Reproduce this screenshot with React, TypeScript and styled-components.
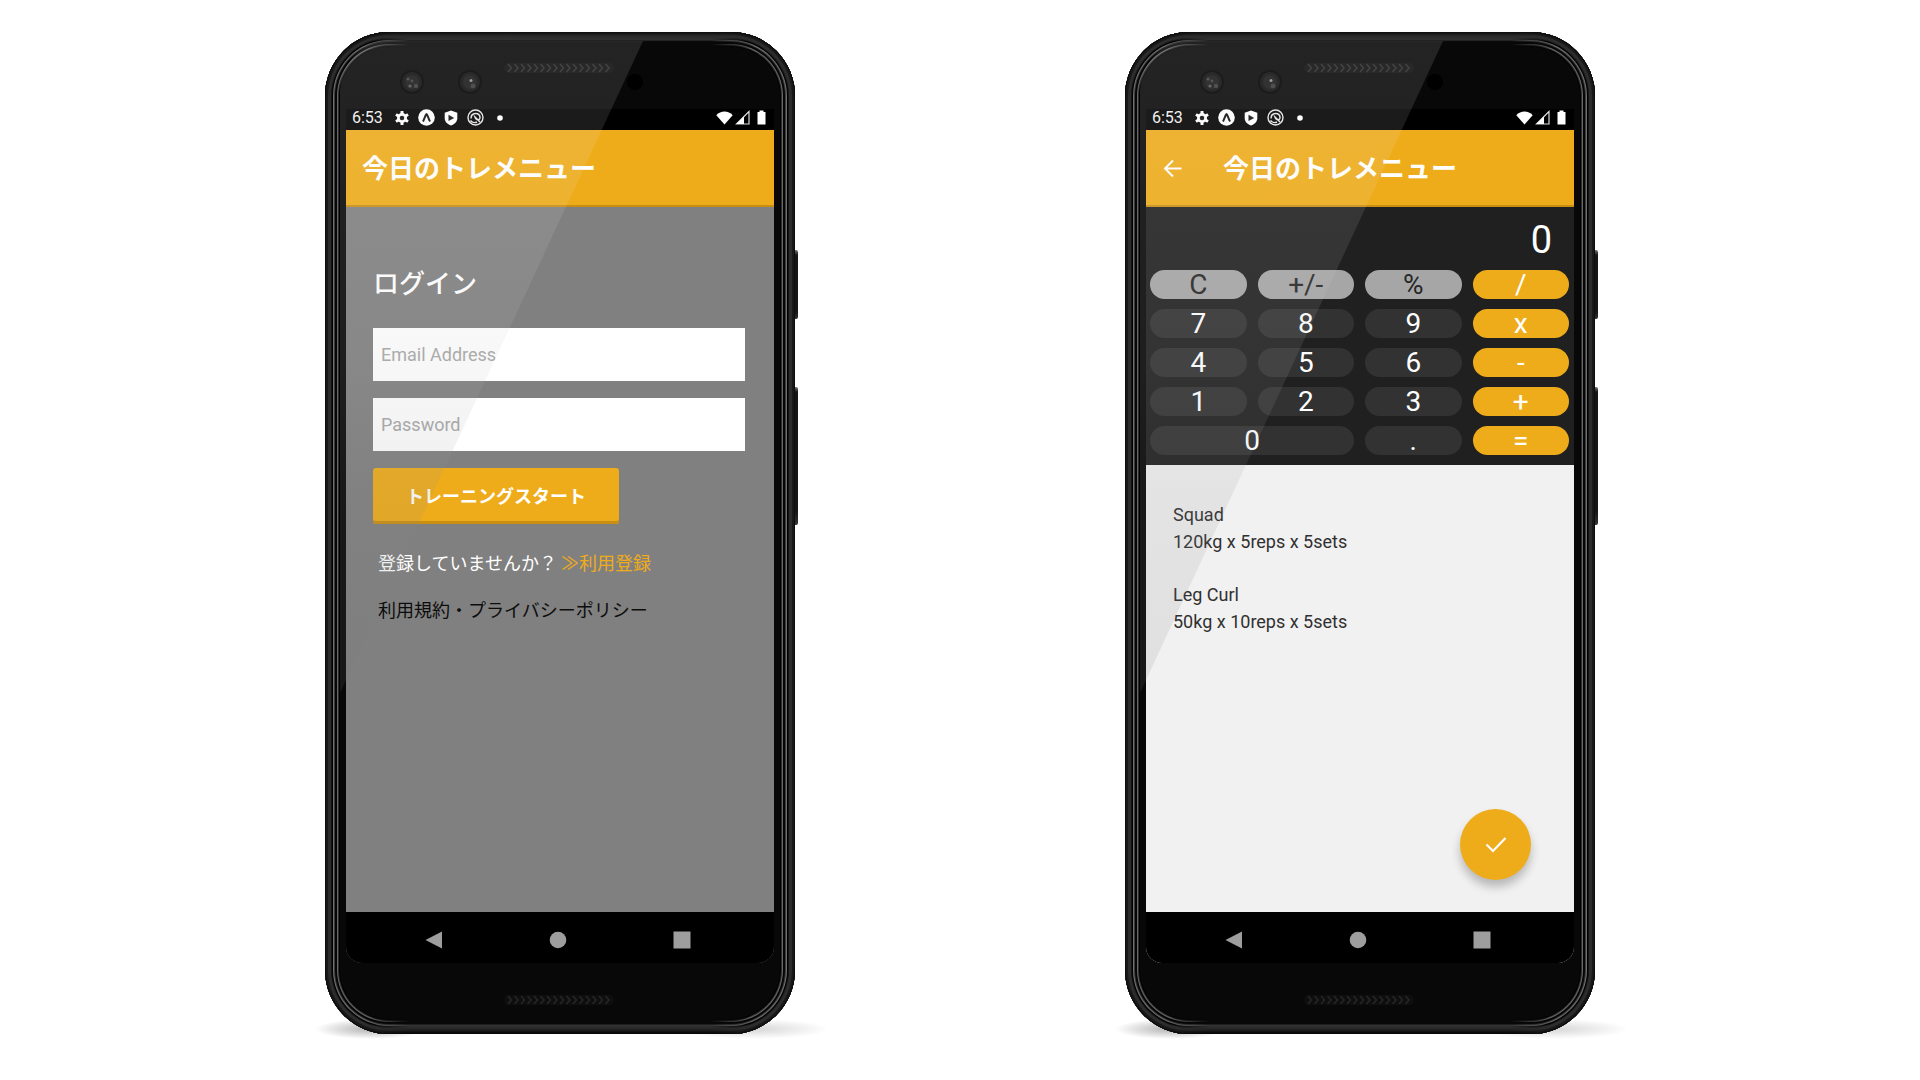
import React, { useState } from "react";
import styled, { createGlobalStyle, css } from "styled-components";

const color = {
  accent: "#efac1a",
  accentDark: "#c98f12",
  ink: "#202020",
  key: "#323232",
  muted: "#a6a6a6",
};

const GlobalStyle = createGlobalStyle`
  *, *::before, *::after { box-sizing: border-box; }
  body {
    margin: 0;
    background: #fff;
    font-family: Roboto, "Noto Sans CJK JP", sans-serif;
  }
  h1, h2, p { margin: 0; }
  button, input { font-family: inherit; }
`;

const Page = styled.main`
  display: grid;
  grid-template-columns: repeat(auto-fit, minmax(480px, 1fr));
  justify-items: center;
  row-gap: 64px;
  max-width: 1600px;
  margin: 0 auto;
  padding: 32px 0 44px;
`;

/* ---------- device ---------- */

const Device = styled.article`
  position: relative;
  isolation: isolate;
  width: 470px;
`;

const GroundShadow = styled.div`
  position: absolute;
  z-index: -1;
  left: -10px;
  right: -34px;
  bottom: -5px;
  height: 20px;
  background:
    radial-gradient(closest-side, rgba(0, 0, 0, 0.3), transparent) left / 110px 20px no-repeat,
    radial-gradient(closest-side, rgba(0, 0, 0, 0.16), transparent) right / 150px 20px no-repeat;
`;

const SideKey = styled.div<{ $top: number; $height: number }>`
  position: absolute;
  z-index: -1;
  top: ${(p) => p.$top}px;
  right: -3px;
  width: 8px;
  height: ${(p) => p.$height}px;
  border-radius: 2px;
  background: linear-gradient(#777, #161616 5px, #161616 90%, #333);
`;

const Shell = styled.div`
  display: flex;
  flex-direction: column;
  padding: 0 21px;
  border-radius: 64px;
  background: #080808;
  box-shadow:
    inset 0 0 0 1px #0c0c0c,
    inset 0 0 0 3px #191919,
    inset 0 0 0 6px #2c2c2c,
    inset 0 0 0 7px #141414,
    inset 0 0 0 8px #000,
    inset 0 0 0 9px #707070,
    inset 0 0 0 10px #3c3c3c,
    inset 0 0 0 12px #060606,
    inset 0 0 0 13px #686868,
    inset 0 0 0 14px #2c2c2c,
    inset 0 0 0 15px #000;
`;

const ShellCap = styled.div`
  position: absolute;
  left: 28px;
  right: 28px;
  height: 16px;
  mask-image: linear-gradient(to right, transparent 12px, #000 56px, #000 calc(100% - 56px), transparent calc(100% - 12px));
`;

const TopCap = styled(ShellCap)`
  top: 0;
  background: linear-gradient(#0d0d0d, #2b2b2b 4px, #343434 8px, #101010 9px, #080808 10px);
  clip-path: polygon(34px 0, calc(100% - 34px) 0, 100% 100%, 0 100%);
`;

const BottomCap = styled(ShellCap)`
  bottom: 0;
  background: linear-gradient(#080808 6px, #333 7px, #262626 11px, #080808 15px);
  clip-path: polygon(0 0, 100% 0, calc(100% - 34px) 100%, 34px 100%);
`;

const Forehead = styled.div`
  display: grid;
  grid-template-columns: 1fr 110px 1fr;
  align-items: start;
  height: 77px;
  padding: 31px 2px 0 0;
`;

const Cameras = styled.div`
  display: flex;
  justify-content: flex-end;
  gap: 34px;
  padding: 7px 22px 0 0;
`;

const Sensor = styled.div`
  width: 16px;
  height: 16px;
  margin: 11px 0 0 13px;
  border-radius: 50%;
  background: #000;
`;

const Chin = styled.div`
  display: flex;
  justify-content: center;
  align-items: flex-start;
  height: 71px;
  padding: 32px 2px 0 0;
`;

const Glare = styled.div`
  position: absolute;
  z-index: 2;
  top: 9px;
  left: 15px;
  width: 304px;
  height: 652px;
  pointer-events: none;
  border-top-left-radius: 50px;
  clip-path: polygon(0 0, 303px 0, 0 652px);
  background: linear-gradient(
    rgba(235, 235, 235, 0.12),
    rgba(225, 225, 225, 0.11) 30%,
    rgba(190, 190, 190, 0.12) 50%,
    rgba(135, 135, 135, 0.13) 70%,
    rgba(120, 120, 120, 0.14)
  );
`;

const Screen = styled.div<{ $bg: string }>`
  display: flex;
  flex-direction: column;
  min-height: 854px;
  background: ${(p) => p.$bg};
  border-radius: 0 0 16px 16px;
  overflow: hidden;
`;

const StatusBar = styled.div`
  display: flex;
  align-items: center;
  height: 21px;
  padding: 0 8px 4px 6px;
  background: #000;
  color: #f2f2f2;
  font-size: 16px;
  line-height: 16px;
`;

const StatusIcons = styled.div`
  display: flex;
  flex: 1;
  align-items: center;
  gap: 9px;
  margin-left: 12px;
`;

const SignalIcons = styled.div`
  display: flex;
  align-items: center;
  gap: 2px;
`;

const AppBar = styled.header`
  display: flex;
  align-items: center;
  height: 77px;
  padding: 0 16px;
  background: ${color.accent};
  box-shadow: inset 0 -2px 0 ${color.accentDark};
`;

const AppTitle = styled.h1`
  color: #fff;
  font-size: 26px;
  font-weight: 700;
  line-height: 40px;
  white-space: nowrap;
`;

const BackButton = styled.button`
  display: flex;
  width: 61px;
  padding: 0;
  border: 0;
  background: none;
  color: #fff;
  cursor: pointer;
`;

const NavBar = styled.nav`
  display: grid;
  grid-template-columns: repeat(3, 124px);
  justify-content: center;
  height: 51px;
  padding: 4px 4px 0 0;
  background: #000;
`;

const NavButton = styled.button`
  display: flex;
  align-items: center;
  justify-content: center;
  padding: 0;
  border: 0;
  background: none;
  color: #9e9e9e;
  cursor: pointer;
`;

/* ---------- login ---------- */

const LoginForm = styled.form`
  display: flex;
  flex: 1;
  flex-direction: column;
  align-items: flex-start;
  padding: 57px 29px 0 27px;
`;

const LoginTitle = styled.h2`
  color: #fff;
  font-size: 26px;
  font-weight: 500;
  line-height: 40px;
  margin-bottom: 24px;
`;

const TextField = styled.input`
  width: 100%;
  height: 53px;
  margin-bottom: 17px;
  padding: 0 8px;
  border: 0;
  border-radius: 0;
  background: #fff;
  color: #222;
  font-size: 18px;

  &::placeholder {
    color: #a8a8a8;
    opacity: 1;
  }
`;

const SubmitButton = styled.button`
  height: 56px;
  padding: 0 33px 3px;
  border: 0;
  border-radius: 3px;
  background: ${color.accent};
  box-shadow: inset 0 -3px 0 ${color.accentDark};
  color: #fff;
  font-size: 18px;
  font-weight: 700;
  white-space: nowrap;
  cursor: pointer;
`;

const FormNote = styled.p`
  display: flex;
  gap: 4px;
  margin-top: 27px;
  padding-left: 5px;
  color: #fff;
  font-size: 18px;
  line-height: 26px;
  white-space: nowrap;
`;

const RegisterLink = styled.a`
  color: ${color.accent};
  text-decoration: none;
`;

const PolicyLink = styled.a`
  margin-top: 21px;
  padding-left: 5px;
  color: #0c0c0c;
  font-size: 18px;
  line-height: 26px;
  text-decoration: none;
  white-space: nowrap;
`;

/* ---------- calculator ---------- */

const Calculator = styled.section`
  padding: 0 5px 10px 4px;
  background: ${color.ink};
`;

const Display = styled.output`
  display: block;
  height: 63px;
  padding-right: 17px;
  color: #fff;
  font-size: 38px;
  line-height: 66px;
  text-align: right;
`;

const Keys = styled.div`
  display: grid;
  grid-template-columns: repeat(4, 1fr);
  grid-auto-rows: 29px;
  gap: 10px 11px;
`;

type Tone = "digit" | "util" | "op";

const tones = {
  digit: css`
    background: ${color.key};
    color: #fff;
  `,
  util: css`
    background: ${color.muted};
    color: #262626;
  `,
  op: css`
    background: ${color.accent};
    color: #fff;
  `,
};

const Key = styled.button<{ $tone: Tone; $wide?: boolean }>`
  grid-column: span ${(p) => (p.$wide ? 2 : 1)};
  padding: 0;
  border: 0;
  border-radius: 15px;
  font-size: 28px;
  line-height: 30px;
  cursor: pointer;
  ${(p) => tones[p.$tone]}
`;

const Notes = styled.section`
  display: flex;
  flex: 1;
  flex-direction: column;
  gap: 26px;
  padding: 36px 43px 32px 27px;
  color: #303030;
  font-size: 18px;
  line-height: 27px;
`;

const CheckButton = styled.button`
  display: flex;
  align-items: center;
  justify-content: center;
  align-self: flex-end;
  width: 71px;
  height: 71px;
  margin-top: auto;
  padding: 0;
  border: 0;
  border-radius: 50%;
  background: ${color.accent};
  box-shadow: 0 7px 10px rgba(0, 0, 0, 0.24);
  color: #fff;
  cursor: pointer;
`;

/* ---------- drawings ---------- */

const Grille = ({ tint }: { tint: string }) => (
  <svg width="110" height="10" viewBox="0 0 110 10" fill="none" aria-hidden="true">
    <rect width="110" height="10" rx="5" fill="#0e0e0e" />
    {Array.from({ length: 16 }, (_, i) => (
      <path key={i} d={`M${4 + i * 6.5} 1l3.5 4-3.5 4`} stroke={tint} strokeWidth="1.6" />
    ))}
  </svg>
);

const Lens = ({ bright }: { bright?: boolean }) => (
  <svg width="24" height="24" viewBox="0 0 24 24" aria-hidden="true">
    <circle cx="12" cy="12" r="11" fill="#101010" stroke="#000" strokeWidth="2" />
    <circle cx="12" cy="12" r="7" fill="#1a1a1a" />
    {bright ? (
      <>
        <circle cx="13" cy="10.5" r="1.5" fill="#909090" />
        <circle cx="15" cy="16" r="2.5" fill="#3a3a3a" />
      </>
    ) : (
      <>
        <circle cx="8" cy="9" r="1.6" fill="#444" />
        <circle cx="12" cy="11" r="1.4" fill="#404040" />
        <circle cx="10" cy="16" r="1.6" fill="#555" />
        <circle cx="16" cy="16" r="2.2" fill="#3c3c3c" />
      </>
    )}
  </svg>
);

const GearIcon = () => (
  <svg width="14" height="14" viewBox="0 0 14 14" aria-hidden="true">
    <g fill="#fff">
      {[0, 60, 120].map((a) => (
        <rect key={a} x="5.5" y="0" width="3" height="14" rx="0.5" transform={`rotate(${a} 7 7)`} />
      ))}
      <circle cx="7" cy="7" r="5" />
    </g>
    <circle cx="7" cy="7" r="2.3" fill="#111" />
  </svg>
);

const ExpoIcon = () => (
  <svg width="17" height="17" viewBox="0 0 17 17" fill="none" aria-hidden="true">
    <circle cx="8.5" cy="8.5" r="8.3" fill="#fff" />
    <path d="M5 12.500C6.500 10 7.300 6 8.500 5.200c1.200.8 2 4.800 3.500 7.300" stroke="#111" strokeWidth="2" />
  </svg>
);

const ShieldIcon = () => (
  <svg width="14" height="16" viewBox="0 0 14 16" aria-hidden="true">
    <path d="M7 .5l6.300 2.200v5.500c0 3.300-2.600 6-6.300 7.300C3.300 14.200.7 11.500.7 8.200V2.700z" fill="#fff" />
    <path d="M4.500 4.700l5.700 3.200-5.700 3.200z" fill="#111" />
  </svg>
);

const SwirlIcon = () => (
  <svg width="17" height="17" viewBox="0 0 17 17" fill="none" stroke="#e6e6e6" aria-hidden="true">
    <circle cx="8.5" cy="8.5" r="7.5" strokeWidth="1.4" />
    <path d="M4 9.500c0-6.500 9-6.500 9-1 0 3-4 3-5-.5L13 13M3.500 11.500c1.500 2 4.500 2.500 6.500 1.500" strokeWidth="1.5" />
  </svg>
);

const DotIcon = () => (
  <svg width="13" height="8" viewBox="0 0 13 8" aria-hidden="true">
    <circle cx="7" cy="4" r="2.8" fill="#fff" />
  </svg>
);

const WifiIcon = () => (
  <svg width="17" height="14" viewBox="0 0 17 14" aria-hidden="true">
    <path d="M.3 4.200C4.500-.6 12.500-.6 16.700 4.200L8.500 13.500z" fill="#fff" />
  </svg>
);

const CellIcon = () => (
  <svg width="15" height="15" viewBox="0 0 15 15" aria-hidden="true">
    <path d="M14 1.500V14H1.500z" fill="none" stroke="#ddd" strokeWidth="1.2" />
    <path d="M9 6.500V14H1.500z" fill="#fff" />
  </svg>
);

const BatteryIcon = () => (
  <svg width="14" height="15" viewBox="0 0 14 15" aria-hidden="true">
    <path d="M7.500.5h4V2H13.500v12.500h-8V2h2z" fill="#fff" />
  </svg>
);

const ArrowIcon = () => (
  <svg width="22" height="22" viewBox="0 0 22 22" fill="none" stroke="currentColor" strokeWidth="2" aria-hidden="true">
    <path d="M19.500 10.500H3.500M11 2.500L3 10.500l8 8" />
  </svg>
);

const CheckIcon = () => (
  <svg width="24" height="24" viewBox="0 0 24 24" fill="none" stroke="currentColor" strokeWidth="2.2" aria-hidden="true">
    <path d="M2.500 11.500L9 18 21.500 5" />
  </svg>
);

const BackGlyph = () => (
  <svg width="18" height="18" viewBox="0 0 18 18" fill="currentColor" aria-hidden="true">
    <path d="M17 .5v17L.5 9z" />
  </svg>
);

const HomeGlyph = () => (
  <svg width="18" height="18" viewBox="0 0 18 18" fill="currentColor" aria-hidden="true">
    <circle cx="9" cy="9" r="8.3" />
  </svg>
);

const RecentsGlyph = () => (
  <svg width="18" height="18" viewBox="0 0 18 18" fill="currentColor" aria-hidden="true">
    <rect x=".5" y=".5" width="17" height="17" />
  </svg>
);

/* ---------- composition ---------- */

function Phone({ screen, children }: { screen: string; children: React.ReactNode }) {
  return (
    <Device>
      <GroundShadow />
      <SideKey $top={218} $height={69} />
      <SideKey $top={355} $height={138} />
      <Shell>
        <TopCap />
        <Forehead>
          <Cameras>
            <Lens />
            <Lens bright />
          </Cameras>
          <Grille tint="#2c2c2c" />
          <Sensor />
        </Forehead>
        <Screen $bg={screen}>
          <StatusBar>
            <span>6:53</span>
            <StatusIcons>
              <GearIcon />
              <ExpoIcon />
              <ShieldIcon />
              <SwirlIcon />
              <DotIcon />
            </StatusIcons>
            <SignalIcons>
              <WifiIcon />
              <CellIcon />
              <BatteryIcon />
            </SignalIcons>
          </StatusBar>
          {children}
          <NavBar aria-label="システム">
            <NavButton type="button" aria-label="戻る"><BackGlyph /></NavButton>
            <NavButton type="button" aria-label="ホーム"><HomeGlyph /></NavButton>
            <NavButton type="button" aria-label="履歴"><RecentsGlyph /></NavButton>
          </NavBar>
        </Screen>
        <Chin>
          <Grille tint="#262626" />
        </Chin>
        <BottomCap />
      </Shell>
      <Glare />
    </Device>
  );
}

const keys: { label: string; tone: Tone; wide?: boolean }[] = [
  { label: "C", tone: "util" },
  { label: "+/-", tone: "util" },
  { label: "%", tone: "util" },
  { label: "/", tone: "op" },
  { label: "7", tone: "digit" },
  { label: "8", tone: "digit" },
  { label: "9", tone: "digit" },
  { label: "x", tone: "op" },
  { label: "4", tone: "digit" },
  { label: "5", tone: "digit" },
  { label: "6", tone: "digit" },
  { label: "-", tone: "op" },
  { label: "1", tone: "digit" },
  { label: "2", tone: "digit" },
  { label: "3", tone: "digit" },
  { label: "+", tone: "op" },
  { label: "0", tone: "digit", wide: true },
  { label: ".", tone: "digit" },
  { label: "=", tone: "op" },
];

const sets = [
  { name: "Squad", plan: "120kg x 5reps x 5sets" },
  { name: "Leg Curl", plan: "50kg x 10reps x 5sets" },
];

function LoginScreen() {
  return (
    <>
      <AppBar>
        <AppTitle>今日のトレメニュー</AppTitle>
      </AppBar>
      <LoginForm onSubmit={(e) => e.preventDefault()}>
        <LoginTitle>ログイン</LoginTitle>
        <TextField type="email" aria-label="Email Address" placeholder="Email Address" />
        <TextField type="password" aria-label="Password" placeholder="Password" />
        <SubmitButton type="submit">トレーニングスタート</SubmitButton>
        <FormNote>
          登録していませんか？
          <RegisterLink href="#register">≫利用登録</RegisterLink>
        </FormNote>
        <PolicyLink href="#policy">利用規約・プライバシーポリシー</PolicyLink>
      </LoginForm>
    </>
  );
}

function CalculatorScreen() {
  const [value, setValue] = useState("0");
  const press = (label: string, tone: Tone) => {
    if (label === "C") setValue("0");
    else if (tone === "digit") setValue((v) => (v === "0" && label !== "." ? label : v + label));
  };
  return (
    <>
      <AppBar>
        <BackButton type="button" aria-label="前の画面へ"><ArrowIcon /></BackButton>
        <AppTitle>今日のトレメニュー</AppTitle>
      </AppBar>
      <Calculator>
        <Display>{value}</Display>
        <Keys>
          {keys.map((k) => (
            <Key key={k.label} type="button" $tone={k.tone} $wide={k.wide} onClick={() => press(k.label, k.tone)}>
              {k.label}
            </Key>
          ))}
        </Keys>
      </Calculator>
      <Notes>
        {sets.map((s) => (
          <p key={s.name}>
            {s.name}
            <br />
            {s.plan}
          </p>
        ))}
        <CheckButton type="button" aria-label="完了"><CheckIcon /></CheckButton>
      </Notes>
    </>
  );
}

export default function App() {
  return (
    <>
      <GlobalStyle />
      <Page>
        <Phone screen="#808080">
          <LoginScreen />
        </Phone>
        <Phone screen="#f1f1f1">
          <CalculatorScreen />
        </Phone>
      </Page>
    </>
  );
}
